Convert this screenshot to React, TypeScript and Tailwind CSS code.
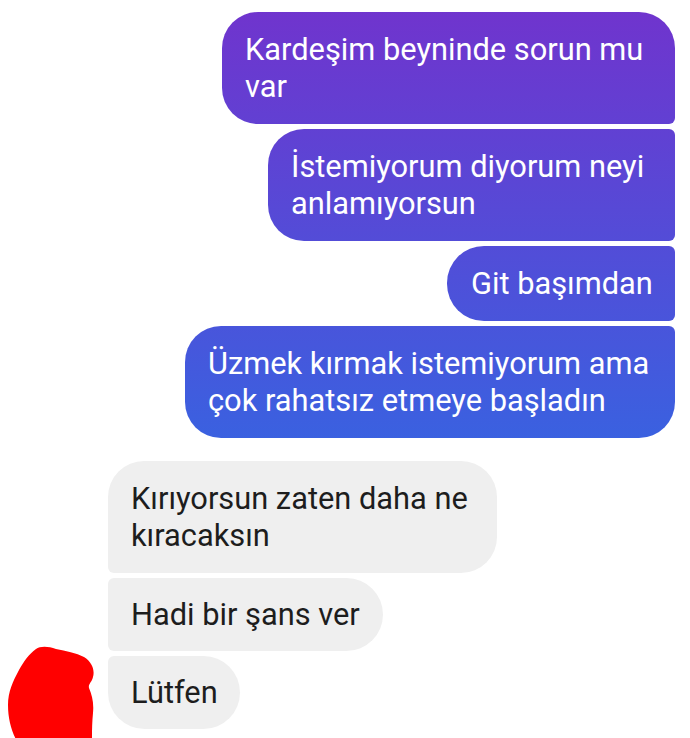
import React from "react";

const out = "bg-[linear-gradient(180deg,#7133cd_0px,#3a61e0_440px,#1f7cec_738px)] bg-fixed text-white";
const inc = "bg-[#efefef] text-[#1d1d1d]";

export default function App() {
  return (
    <div
      className="w-[690px] h-[738px] overflow-hidden bg-white pt-[12px]"
      style={{ fontFamily: "Roboto, 'Noto Sans', sans-serif" }}
    >
      <div className="flex flex-col items-end gap-[5px] pr-[15px]">
        <div className={`${out} rounded-[36px] rounded-br-[6px] px-[23px] py-[19px] text-[30.8px] leading-[37px] w-[453px] whitespace-nowrap`}>
          Kardeşim beyninde sorun mu
          <br />
          var
        </div>
        <div className={`${out} rounded-l-[36px] rounded-r-[6px] px-[23px] py-[19px] text-[30.8px] leading-[37px] w-[407px] whitespace-nowrap`}>
          İstemiyorum diyorum neyi
          <br />
          anlamıyorsun
        </div>
        <div className={`${out} rounded-l-[37px] rounded-r-[6px] px-[24px] py-[19px] text-[30.8px] leading-[37px] w-[228px] whitespace-nowrap`}>
          Git başımdan
        </div>
        <div className={`${out} rounded-l-[36px] rounded-tr-[6px] rounded-br-[36px] px-[23px] py-[19px] text-[30.8px] leading-[37px] w-[490px] whitespace-nowrap`}>
          Üzmek kırmak istemiyorum ama
          <br />
          çok rahatsız etmeye başladın
        </div>
      </div>

      <div className="mt-[23px] flex flex-col gap-[5px]">
        <div className="flex pl-[108px]">
          <div className={`${inc} rounded-r-[36px] rounded-tl-[36px] rounded-bl-[6px] px-[23px] py-[19px] text-[30.8px] leading-[37px] w-[389px] whitespace-nowrap`}>
            Kırıyorsun zaten daha ne
            <br />
            kıracaksın
          </div>
        </div>
        <div className="flex pl-[108px]">
          <div className={`${inc} rounded-r-[37px] rounded-l-[6px] px-[23px] py-[18px] text-[30.8px] leading-[37px] w-[275px] whitespace-nowrap`}>
            Hadi bir şans ver
          </div>
        </div>
        <div className="flex items-start">
          <svg
            className="block shrink-0 w-[108px] h-[100px] -mt-[10px]"
            viewBox="0 648 108 100"
          >
            <path
              d="M36 651 C40 648 48 648 56 651 C66 653 76 655 84 659 C92 664 95 672 93 679 C92 684 88 686 89 690 C92 697 94 705 93 715 C92 725 92 733 92 745 L18 745 C12 735 8 722 8 707 C8 694 13 683 19 672 C24 663 29 656 36 651 Z"
              fill="#ff0000"
            />
          </svg>
          <div className={`${inc} rounded-r-[37px] rounded-tl-[6px] rounded-bl-[37px] px-[23px] py-[18px] text-[30.8px] leading-[37px] w-[132px] whitespace-nowrap`}>
            Lütfen
          </div>
        </div>
      </div>
    </div>
  );
}
